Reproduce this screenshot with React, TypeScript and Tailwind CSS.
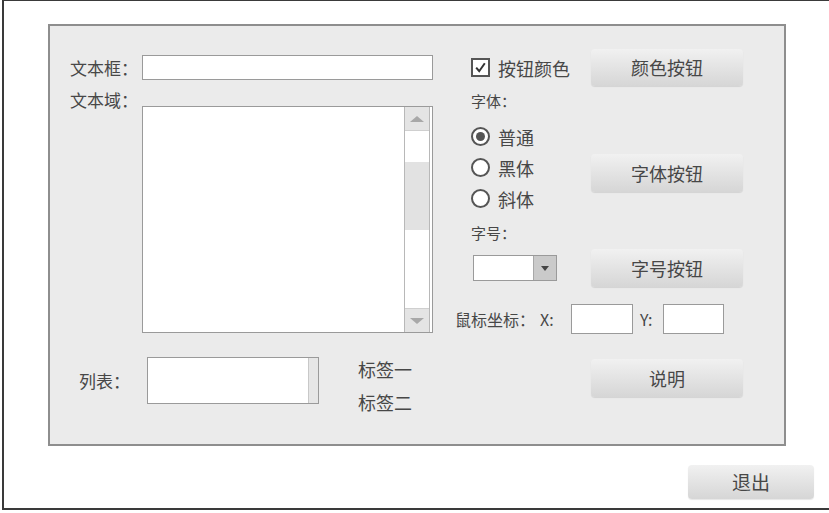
import React from "react";

const font = { fontFamily: '"Noto Sans CJK SC", "Noto Sans", sans-serif' };

function Btn({ label, className }: { label: string; className: string }) {
  return (
    <div
      className={
        "flex items-center justify-center rounded-[4px] bg-linear-to-b from-[#f1f1f1] to-[#d6d6d6] text-[#474747] shadow-[0_1px_1px_rgba(0,0,0,0.10)] " +
        className
      }
    >
      {label}
    </div>
  );
}

function Radio({ checked, label }: { checked?: boolean; label: string }) {
  return (
    <div className="flex h-[31px] items-center">
      <div className="flex h-[19px] w-[19px] items-center justify-center rounded-full border-2 border-[#555] bg-white">
        {checked && <div className="h-[9px] w-[9px] rounded-full bg-[#555]" />}
      </div>
      <span className="ml-[8px] text-[18px] leading-none">{label}</span>
    </div>
  );
}

export default function App() {
  return (
    <div className="h-[513px] w-[829px] overflow-hidden bg-white text-[#474747]" style={font}>
      <div className="ml-[2px] flex h-[510px] w-[827px] flex-col border-b-2 border-l-2 border-t border-[#3a3a3a]">
        {/* panel */}
        <div className="ml-[44px] mt-[23px] flex h-[422px] w-[738px] border-2 border-[#8e8e8e] bg-[#ebebeb]">
          {/* left column */}
          <div className="flex w-[383px] flex-col">
            <div className="mt-[29px] flex h-[25px] items-center">
              <div className="w-[92px] pl-[20px] text-[17px] leading-none">文本框：</div>
              <div className="h-[25px] w-[291px] border border-[#9a9a9a] bg-white" />
            </div>
            <div className="mt-[10px] flex items-start">
              <div className="w-[92px] pl-[20px] text-[17px] leading-[20px]">文本域：</div>
              <div className="mt-[16px] flex h-[227px] w-[291px] border border-[#9a9a9a] bg-white">
                <div className="flex-1" />
                <div className="mr-[2px] flex w-[26px] flex-col border-x border-[#b8b8b8] bg-white">
                  <div className="flex h-[24px] items-center justify-center border-b border-[#cfcfcf] bg-[#e4e4e4]">
                    <div className="h-0 w-0 border-b-[6px] border-l-[7px] border-r-[7px] border-b-[#a8a8a8] border-l-transparent border-r-transparent" />
                  </div>
                  <div className="h-[31px]" />
                  <div className="h-[68px] bg-[#e2e2e2]" />
                  <div className="flex-1" />
                  <div className="flex h-[24px] items-center justify-center border-t border-[#cfcfcf] bg-[#e4e4e4]">
                    <div className="h-0 w-0 border-l-[7px] border-r-[7px] border-t-[6px] border-l-transparent border-r-transparent border-t-[#a8a8a8]" />
                  </div>
                </div>
              </div>
            </div>
            <div className="mt-[24px] flex">
              <div className="flex h-[47px] w-[97px] items-center pl-[29px] text-[17px] leading-none">列表：</div>
              <div className="flex h-[47px] w-[172px] border border-[#9a9a9a] bg-white">
                <div className="flex-1" />
                <div className="w-[10px] border-l border-[#c8c8c8] bg-[#e6e6e6]" />
              </div>
              <div className="ml-[39px] flex flex-col text-[18px]">
                <div className="h-[24px] leading-[24px]">标签一</div>
                <div className="mt-[9px] h-[24px] leading-[24px]">标签二</div>
              </div>
            </div>
          </div>

          {/* right column */}
          <div className="ml-[22px] flex flex-col">
            <div className="flex">
              <div className="flex w-[136px] flex-col pl-[16px]">
                <div className="mt-[23px] flex h-[37px] items-center">
                  <div className="flex h-[19px] w-[19px] items-center justify-center border-2 border-[#555] bg-white">
                    <svg width="13" height="13" viewBox="0 0 13 13">
                      <path d="M2.2 6.6 L5.2 10.2 L10.8 2.2" fill="none" stroke="#333" strokeWidth="2" />
                    </svg>
                  </div>
                  <span className="ml-[8px] text-[18px] leading-none">按钮颜色</span>
                </div>
                <div className="mt-[3px] h-[24px] text-[15px] leading-[24px]">字体：</div>
                <div className="mt-[8px] flex flex-col">
                  <Radio checked label="普通" />
                  <Radio label="黑体" />
                  <Radio label="斜体" />
                </div>
                <div className="mt-[7px] h-[24px] text-[15px] leading-[24px]">字号：</div>
                <div className="ml-[2px] mt-[10px] flex h-[26px] w-[84px] border border-[#9a9a9a] bg-white">
                  <div className="flex-1" />
                  <div className="flex w-[23px] items-center justify-center border-l border-[#a8a8a8] bg-[#cacaca]">
                    <div className="h-0 w-0 border-l-[4px] border-r-[4px] border-t-[5px] border-l-transparent border-r-transparent border-t-[#444]" />
                  </div>
                </div>
              </div>
              <div className="flex w-[152px] flex-col">
                <Btn label="颜色按钮" className="mt-[23px] h-[37px] w-[152px] text-[18px]" />
                <Btn label="字体按钮" className="mt-[68px] h-[38px] w-[152px] text-[18px]" />
                <Btn label="字号按钮" className="mt-[57px] h-[38px] w-[152px] text-[18px]" />
              </div>
            </div>
            <div className="mt-[17px] flex h-[30px] items-center text-[16px] leading-none">
              <span className="w-[85px]">鼠标坐标：</span>
              <span className="w-[31px]">X:</span>
              <div className="h-[30px] w-[62px] border border-[#9a9a9a] bg-white" />
              <span className="w-[30px] pl-[7px]">Y:</span>
              <div className="h-[30px] w-[61px] border border-[#9a9a9a] bg-white" />
            </div>
            <Btn label="说明" className="ml-[136px] mt-[25px] h-[38px] w-[152px] text-[18px]" />
          </div>
        </div>
        <div className="mr-[15px] mt-[19px] flex justify-end">
          <Btn label="退出" className="h-[34px] w-[126px] text-[19px]" />
        </div>
      </div>
    </div>
  );
}
